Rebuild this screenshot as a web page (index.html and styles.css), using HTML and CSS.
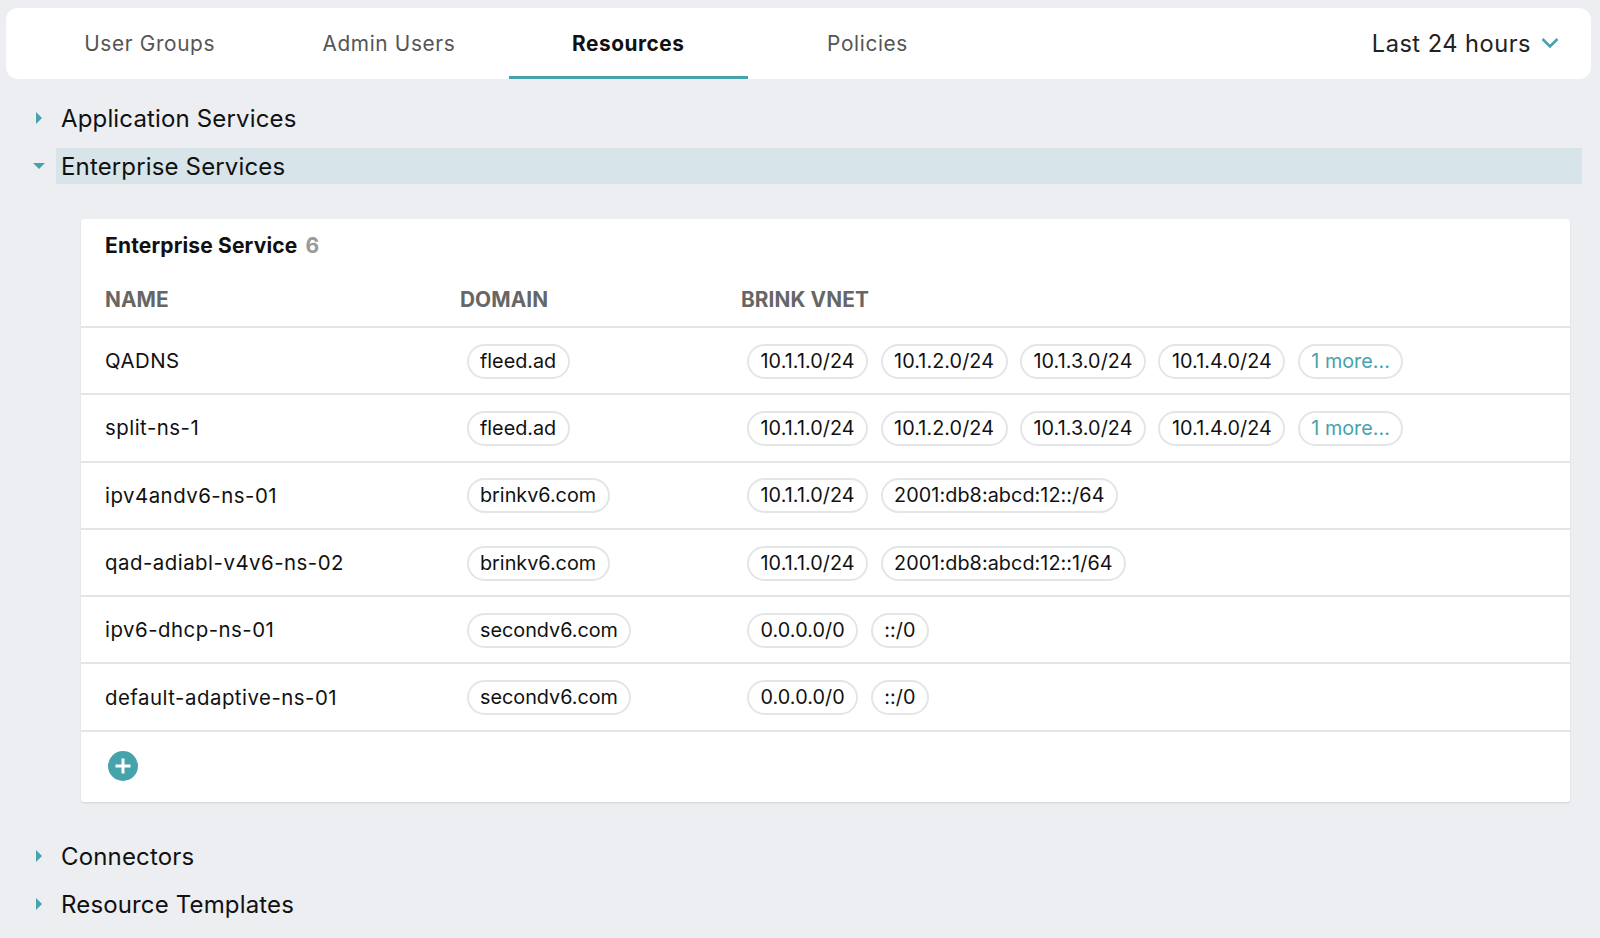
FILE: index.html
```html
<!DOCTYPE html>
<html lang="en">
<head>
    <meta charset="UTF-8">
    <title>Resources</title>
    <link rel="stylesheet" href="styles.css">
</head>
<body>
    <div class="topbar">
        <div class="tabs">
            <div class="tab">User Groups</div>
            <div class="tab">Admin Users</div>
            <div class="tab active">Resources</div>
            <div class="tab">Policies</div>
        </div>
        <div class="range">
            Last 24 hours
            <svg width="18" height="12" viewBox="0 0 18 12"><path d="M1.5 2l7.5 7.5 7.5-7.5" fill="none" stroke="#46a3ab" stroke-width="2.6"/></svg>
        </div>
    </div>

    <div class="section"><span class="caret"></span><div class="section-name">Application Services</div></div>
    <div class="section open"><span class="caret"></span><div class="section-name">Enterprise Services</div></div>

    <div class="card">
        <div class="card-title">Enterprise Service <span class="count">6</span></div>
        <div class="row head">
            <div class="name">NAME</div>
            <div>DOMAIN</div>
            <div>BRINK VNET</div>
        </div>
        <div class="row">
            <div class="name">QADNS</div>
            <div class="chips"><span class="chip">fleed.ad</span></div>
            <div class="chips"><span class="chip">10.1.1.0/24</span><span class="chip">10.1.2.0/24</span><span class="chip">10.1.3.0/24</span><span class="chip">10.1.4.0/24</span><span class="chip more">1 more...</span></div>
        </div>
        <div class="row">
            <div class="name">split-ns-1</div>
            <div class="chips"><span class="chip">fleed.ad</span></div>
            <div class="chips"><span class="chip">10.1.1.0/24</span><span class="chip">10.1.2.0/24</span><span class="chip">10.1.3.0/24</span><span class="chip">10.1.4.0/24</span><span class="chip more">1 more...</span></div>
        </div>
        <div class="row">
            <div class="name">ipv4andv6-ns-01</div>
            <div class="chips"><span class="chip">brinkv6.com</span></div>
            <div class="chips"><span class="chip">10.1.1.0/24</span><span class="chip">2001:db8:abcd:12::/64</span></div>
        </div>
        <div class="row">
            <div class="name">qad-adiabl-v4v6-ns-02</div>
            <div class="chips"><span class="chip">brinkv6.com</span></div>
            <div class="chips"><span class="chip">10.1.1.0/24</span><span class="chip">2001:db8:abcd:12::1/64</span></div>
        </div>
        <div class="row">
            <div class="name">ipv6-dhcp-ns-01</div>
            <div class="chips"><span class="chip">secondv6.com</span></div>
            <div class="chips"><span class="chip">0.0.0.0/0</span><span class="chip">::/0</span></div>
        </div>
        <div class="row">
            <div class="name">default-adaptive-ns-01</div>
            <div class="chips"><span class="chip">secondv6.com</span></div>
            <div class="chips"><span class="chip">0.0.0.0/0</span><span class="chip">::/0</span></div>
        </div>
        <div class="card-foot">
            <svg class="add" width="30" height="30" viewBox="0 0 30 30"><circle cx="15" cy="15" r="15" fill="#46a3ab"/><path d="M15 7.5v15M7.5 15h15" stroke="#fff" stroke-width="3"/></svg>
        </div>
    </div>

    <div class="section"><span class="caret"></span><div class="section-name">Connectors</div></div>
    <div class="section"><span class="caret"></span><div class="section-name">Resource Templates</div></div>
</body>
</html>
```

FILE: styles.css
```css
body {
    margin: 0;
    padding: 8px 9px 0 6px;
    height: 938px;
    box-sizing: border-box;
    overflow: hidden;
    background: #eceef2;
    font-family: Inter, "Liberation Sans", sans-serif;
    color: #111;
}
.topbar {
    display: flex;
    justify-content: space-between;
    align-items: center;
    height: 71px;
    padding: 0 32px 0 24px;
    margin-bottom: 21px;
    background: #fff;
    border-radius: 12px;
}
.tabs { display: flex; height: 100%; }
.tab {
    width: 239.3px;
    display: flex;
    align-items: center;
    justify-content: center;
    box-sizing: border-box;
    font-size: 20.8px;
    letter-spacing: 0.65px;
    color: #555;
}
.tab.active {
    font-weight: 700;
    letter-spacing: 0.55px;
    color: #111;
    border-bottom: 3px solid #46a3ab;
    padding-top: 3px;
}
.range {
    display: flex;
    align-items: center;
    gap: 10px;
    padding-bottom: 1px;
    font-size: 23.6px;
    letter-spacing: 0.5px;
    color: #222;
}

.section {
    display: flex;
    align-items: center;
    height: 36px;
    margin: 0 9px 12px 0;
    padding-left: 30px;
}
.caret {
    width: 0;
    height: 0;
    margin-right: 14px;
    border-left: 6px solid #46a3ab;
    border-top: 6px solid transparent;
    border-bottom: 6px solid transparent;
}
.section.open .caret {
    margin: 0 11px 0 -3px;
    border-top: 6px solid #46a3ab;
    border-left: 6px solid transparent;
    border-right: 6px solid transparent;
    border-bottom: 0;
}
.section-name {
    flex: 1;
    height: 36px;
    padding-left: 5px;
    font-size: 24px;
    letter-spacing: 0.15px;
    line-height: 38px;
}
.section.open .section-name { background: #d7e4e9; }

.card {
    margin: 35px 21px 36px 75px;
    background: #fff;
    border-radius: 3px;
    box-shadow: 0 1px 2px rgba(0,0,0,0.12);
}
.card-title {
    padding: 14px 24px 0;
    height: 39px;
    font-size: 21px;
    font-weight: 700;
    letter-spacing: 0.15px;
    line-height: 26px;
}
.count { margin-left: 3px; color: #999; }
.row {
    display: grid;
    grid-template-columns: 355px 281px 1fr;
    align-items: center;
    height: 65.3px;
    padding-left: 24px;
    border-bottom: 2px solid #e4e5e8;
    font-size: 20.4px;
    letter-spacing: 0.5px;
}
.row.head {
    height: 54px;
    font-size: 20.8px;
    font-weight: 700;
    color: #666;
    letter-spacing: 0.1px;
}
.chips { display: flex; gap: 12.4px; margin-left: 6.5px; padding-top: 1px; }
.chips + .chips { margin-left: 6px; }
.chip {
    height: 35px;
    line-height: 31.5px;
    box-sizing: border-box;
    padding: 0 11.5px;
    border: 2px solid #e4e5e7;
    border-radius: 18px;
    font-size: 19.8px;
    letter-spacing: 0;
}
.chips + .chips .chip { letter-spacing: 0.07px; }
.chips + .chips .chip.more { color: #46a3ab; letter-spacing: 0; }
.card-foot {
    display: flex;
    align-items: center;
    height: 70px;
    padding: 0 0 1px 27px;
    box-sizing: border-box;
}
```
